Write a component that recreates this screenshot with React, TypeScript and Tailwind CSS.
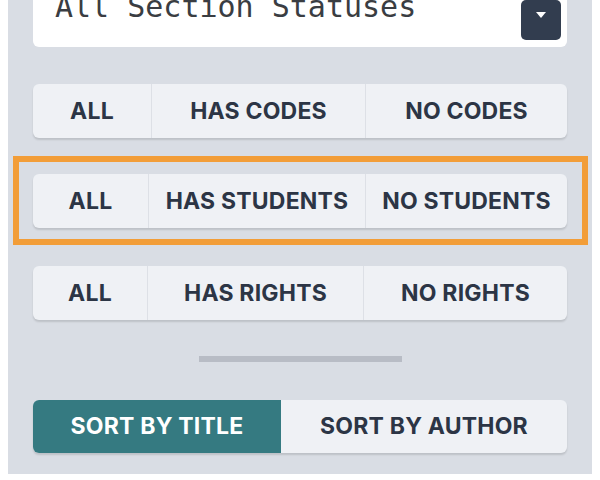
import React from "react";

const font = { fontFamily: "Inter, Lato, 'Noto Sans', sans-serif" };

function Group({
  items,
  cols,
}: {
  items: string[];
  cols: string;
}) {
  return (
    <div
      className={`grid ${cols} h-[54px] rounded-[6px] bg-[#eff1f5] shadow-[0_2px_2px_rgba(0,0,0,0.13)]`}
    >
      {items.map((t, i) => (
        <div
          key={t}
          className={`flex items-center justify-center text-[23px] font-bold tracking-[0.2px] text-[#2c3545] whitespace-nowrap ${
            i > 0 ? "border-l border-[#dde0e6]" : ""
          }`}
          style={font}
        >
          {t}
        </div>
      ))}
    </div>
  );
}

export default function App() {
  return (
    <div className="w-[600px] h-[480px] bg-white">
      <div className="ml-[8px] w-[584px] h-[474px] bg-[#d9dde4] px-[25px] flex flex-col overflow-hidden">
        <div className="mt-[-13px] h-[60px] shrink-0 rounded-[6px] bg-white flex justify-between pl-[22px] pr-[6px]">
          <span
            className="mt-[0px] text-[30px] leading-[40px] text-[#3a3d42]"
            style={{ fontFamily: "'DejaVu Sans Mono', monospace" }}
          >
            All Section Statuses
          </span>
          <div className="self-end mb-[7px] w-[40px] h-[40px] rounded-[5px] bg-[#323d4f] flex items-center justify-center">
            <svg width="12" height="8" viewBox="0 0 12 8" className="mt-[-10px]">
              <path d="M1 1h10L6 7z" fill="#ffffff" />
            </svg>
          </div>
        </div>

        <div className="mt-[37px]">
          <Group items={["ALL", "HAS CODES", "NO CODES"]} cols="grid-cols-[118px_214px_1fr]" />
        </div>

        <div className="mt-[18px] ml-[-20px] mr-[-21px] border-[6px] border-[#f29d38] pl-[14px] pr-[15px] pt-[12px] pb-[11px]">
          <Group items={["ALL", "HAS STUDENTS", "NO STUDENTS"]} cols="grid-cols-[115px_217px_1fr]" />
        </div>

        <div className="mt-[21px]">
          <Group items={["ALL", "HAS RIGHTS", "NO RIGHTS"]} cols="grid-cols-[114px_216px_1fr]" />
        </div>

        <div className="mt-[36px] self-center w-[203px] h-[6px] bg-[#b8bcc5]" />

        <div className="mt-[38px] grid grid-cols-[248px_1fr] h-[53px] rounded-[6px] bg-[#eff1f5] shadow-[0_2px_2px_rgba(0,0,0,0.13)]">
          <div
            className="flex items-center justify-center rounded-l-[6px] bg-[#357a81] text-white text-[23px] font-bold tracking-[0.2px] whitespace-nowrap"
            style={font}
          >
            SORT BY TITLE
          </div>
          <div
            className="flex items-center justify-center text-[#2c3545] text-[23px] font-bold tracking-[0.2px] whitespace-nowrap"
            style={font}
          >
            SORT BY AUTHOR
          </div>
        </div>
      </div>
    </div>
  );
}
